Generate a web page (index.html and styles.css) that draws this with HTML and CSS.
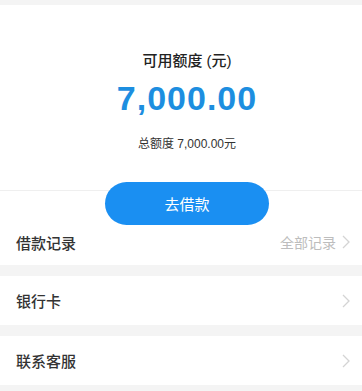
FILE: index.html
```html
<!DOCTYPE html>
<html lang="zh">
<head>
<meta charset="utf-8">
<link rel="stylesheet" href="styles.css">
</head>
<body>
<div class="page">
  <section class="summary">
    <div class="title">可用额度 (元)</div>
    <div class="amount">7,000.00</div>
    <div class="total">总额度 7,000.00元</div>
    <div class="btn-row"><button class="btn">去借款</button></div>
    <div class="row row-first">
      <span class="label">借款记录</span>
      <span class="extra">全部记录<svg class="chev" width="8" height="14" viewBox="0 0 8 14"><path d="M1 1l6 6-6 6" fill="none" stroke="#d4d4d4" stroke-width="1.3"/></svg></span>
    </div>
  </section>
  <section class="card">
    <div class="row">
      <span class="label">银行卡</span>
      <svg class="chev" width="8" height="14" viewBox="0 0 8 14"><path d="M1 1l6 6-6 6" fill="none" stroke="#d4d4d4" stroke-width="1.3"/></svg>
    </div>
  </section>
  <section class="card">
    <div class="row">
      <span class="label">联系客服</span>
      <svg class="chev" width="8" height="14" viewBox="0 0 8 14"><path d="M1 1l6 6-6 6" fill="none" stroke="#d4d4d4" stroke-width="1.3"/></svg>
    </div>
  </section>
</div>
</body>
</html>
```
FILE: styles.css
```css
html, body {
  margin: 0;
  padding: 0;
  background: #f4f4f4;
  font-family: "Liberation Sans", "Noto Sans CJK SC", sans-serif;
}
.page {
  padding-top: 5px;
  display: flex;
  flex-direction: column;
  gap: 11px;
}
.summary {
  background: #fff;
  display: flex;
  flex-direction: column;
  align-items: center;
  padding-top: 46px;
}
.title,
.amount,
.total {
  padding-left: 12px;
}
.title {
  font-size: 15px;
  line-height: 20px;
  color: #222;
  font-weight: 500;
}
.amount {
  margin-top: 7px;
  font-size: 34px;
  line-height: 40px;
  font-weight: 700;
  letter-spacing: 1px;
  color: #1d8ee0;
}
.total {
  margin-top: 18px;
  font-size: 12px;
  line-height: 16px;
  color: #333;
}
.btn-row {
  margin-top: 30px;
  align-self: stretch;
  display: flex;
  justify-content: center;
  padding-left: 12px;
  background: linear-gradient(to bottom, #fff 0, #fff 8px, #efefef 8px, #efefef 9px, #fff 9px);
}
.btn {
  width: 164px;
  height: 43px;
  border: none;
  border-radius: 22px;
  background: #1a8ff2;
  color: #fff;
  font-family: "Liberation Sans", "Noto Sans CJK SC", sans-serif;
  font-size: 15px;
  padding: 0;
}
.card {
  background: #fff;
}
.row {
  align-self: stretch;
  display: flex;
  align-items: center;
  justify-content: space-between;
  padding: 0 12px 0 16px;
  height: 49px;
}
.row-first {
  height: 34px;
  padding-bottom: 6px;
}
.label {
  font-size: 15px;
  color: #333;
  font-weight: 500;
}
.extra {
  display: flex;
  align-items: center;
  gap: 6px;
  font-size: 14px;
  color: #bdbdbd;
}
.chev {
  display: block;
}
```
